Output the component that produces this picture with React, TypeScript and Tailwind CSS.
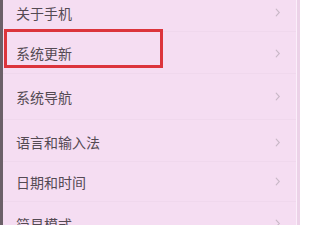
import React from "react";

const rows = [
  { label: "关于手机", h: "h-[32px]", pad: "pb-[6px]" },
  { label: "系统更新", h: "h-[42px]", pad: "pt-[1px]" },
  { label: "系统导航", h: "h-[46px]", pad: "" },
  { label: "语言和输入法", h: "h-[42px]", pad: "pt-[3px]" },
  { label: "日期和时间", h: "h-[40px]", pad: "" },
  { label: "简易模式", h: "h-[44px]", pad: "" },
];

const Chevron = () => (
  <svg width="6" height="9" viewBox="0 0 6 9" className="shrink-0">
    <path d="M1.2 1.2 L4.3 4.5 L1.2 7.8" fill="none" stroke="#c9b8c7" strokeWidth="1.1" strokeLinecap="round" />
  </svg>
);

const App = () => {
  return (
    <div className="w-[300px] h-[225px] overflow-hidden flex bg-[#f5ddf2]">
      {/* dark bezel on the left */}
      <div className="w-[3px] bg-[#6b6068]" />
      <div className="flex-1 flex flex-col">
        {rows.map((row, idx) => (
          <div
            key={idx}
            className={`${row.h} ${row.pad} relative flex items-center justify-between pl-[13px] pr-[15px] border-b border-[#f0d8ed] shrink-0`}
          >
            <span
              className="text-[14px] leading-none text-[#544a53]"
              style={{ fontFamily: '"Noto Sans CJK SC", "Noto Sans", sans-serif' }}
            >
              {row.label}
            </span>
            <Chevron />
            {idx === 1 && (
              <div className="absolute left-[1px] top-[-3px] w-[159px] h-[39px] border-[3.5px] border-[#dc343c]" />
            )}
          </div>
        ))}
      </div>
      <div className="w-[1px] bg-[#fbeefa]" />
      <div className="w-[3px] bg-[#ecd2e8]" />
    </div>
  );
};

export default App;
